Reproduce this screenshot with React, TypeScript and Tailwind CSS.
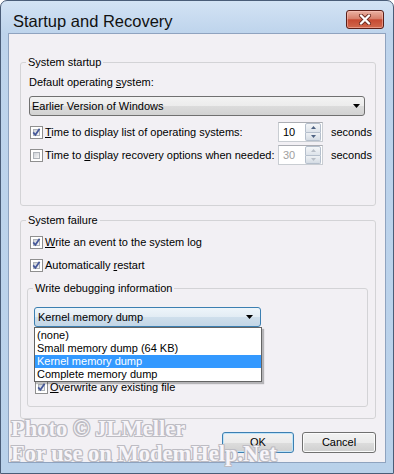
import React from "react";

function Check({ checked = false }: { checked?: boolean }) {
  return (
    <span className="relative block w-[13px] h-[13px] shrink-0 border border-[#8f8f8f] bg-white p-[2px]">
      <span className="block w-full h-full border border-[#aeb3b9] bg-[linear-gradient(135deg,#cfd3d9,#f7f7f7)]" />
      {checked && (
        <svg className="absolute left-0 top-0" width="11" height="11" viewBox="0 0 11 11">
          <path d="M2.2 5.4 L4.4 7.8 L8.6 1.8" fill="none" stroke="#45589a" strokeWidth="1.7" />
        </svg>
      )}
    </span>
  );
}

function Arrow() {
  return (
    <svg width="7" height="4" viewBox="0 0 7 4">
      <polygon points="0,0 7,0 3.5,4" fill="#000" />
    </svg>
  );
}

function Spinner({ value, disabled = false }: { value: string; disabled?: boolean }) {
  const arrow = disabled ? "#b9bfc8" : "#4d6282";
  return (
    <div className="flex h-[20px] w-[45px] shrink-0 border border-[#c9cdd2] border-t-[#abadb3] bg-white">
      <span className={`flex-1 pl-[4px] leading-[18px] ${disabled ? "text-[#a0a0a0]" : "text-black"}`}>{value}</span>
      <div className="flex w-[16px] flex-col mr-[1px]">
        <span className="flex flex-1 items-center justify-center border border-[#b5bfcc] rounded-t-[2px] bg-[linear-gradient(#f4f6f8,#dde3ea)]">
          <svg width="5" height="3" viewBox="0 0 5 3">
            <polygon points="0,3 5,3 2.5,0" fill={arrow} />
          </svg>
        </span>
        <span className="flex flex-1 items-center justify-center border border-t-0 border-[#b5bfcc] rounded-b-[2px] bg-[linear-gradient(#eef1f4,#d5dce4)]">
          <svg width="5" height="3" viewBox="0 0 5 3">
            <polygon points="0,0 5,0 2.5,3" fill={arrow} />
          </svg>
        </span>
      </div>
    </div>
  );
}

function Legend({ children, offset }: { children: React.ReactNode; offset: string }) {
  return <legend className={`${offset} px-[2px] leading-[13px]`}>{children}</legend>;
}

const items = ["(none)", "Small memory dump (64 KB)", "Kernel memory dump", "Complete memory dump"];

export default function App() {
  return (
    <div className="relative flex h-[474px] w-[394px] flex-col overflow-hidden rounded-t-[7px] border border-[#4a5d78] bg-[linear-gradient(#d3e3f4,#bed4ec_32px,#b9d1ea)] font-['Liberation_Sans',Arial,sans-serif] text-[11px] text-black">
      <div className="flex h-[32px] shrink-0 items-start justify-between pl-[12px] pr-[9px]">
        <span className="mt-[10px] text-[16.5px] leading-[20px] text-[#111]">Startup and Recovery</span>
        <div className="mt-[9px] flex h-[19px] w-[38px] items-center justify-center rounded-[3px] border border-[#5a1f19] bg-[linear-gradient(#eab2a3,#d7806c_45%,#c64a33_52%,#d0684d)] shadow-[inset_0_0_0_1px_rgba(255,200,190,0.5)]">
          <svg width="14" height="11" viewBox="0 0 14 11">
            <path d="M3 1.5 L11 9.5 M11 1.5 L3 9.5" stroke="#6b2a20" strokeWidth="4" strokeLinecap="round" />
            <path d="M3 1.5 L11 9.5 M11 1.5 L3 9.5" stroke="#ffffff" strokeWidth="2.4" strokeLinecap="round" />
          </svg>
        </div>
      </div>

      <div className="mx-[7px] flex min-w-0 flex-1 flex-col border border-[#8fa3bf] bg-[#f2f0f4] pl-[11px] pr-[9px] pt-[22px] pb-[9px]">
        <fieldset className="min-w-0 rounded-[3px] border border-[#d3d3d6] pl-[8px] pr-[7px] pb-[40px]">
          <Legend offset="-ml-[3px]">System startup</Legend>
          <div className="mt-[7px] leading-[13px]">
            Default operating <span className="underline">s</span>ystem:
          </div>
          <div className="mt-[7px] mr-[3px] flex h-[20px] items-center justify-between rounded-[3px] border border-[#707070] bg-[linear-gradient(#f3f3f3,#ececec_50%,#dcdcdc_50%,#d2d2d2)] pl-[2px] pr-[4px]">
            <span>Earlier Version of Windows</span>
            <Arrow />
          </div>
          <div className="mt-[6px] flex h-[20px] items-center">
            <div className="flex w-[249px] shrink-0 items-center">
              <span className="ml-[1px]"><Check checked /></span>
              <span className="ml-[2px] whitespace-nowrap">
                <span className="underline">T</span>ime to display list of operating systems:
              </span>
            </div>
            <Spinner value="10" />
            <span className="ml-[8px] whitespace-nowrap">seconds</span>
          </div>
          <div className="mt-[3px] flex h-[20px] items-center">
            <div className="flex w-[249px] shrink-0 items-center">
              <span className="ml-[1px]"><Check /></span>
              <span className="ml-[2px] whitespace-nowrap">
                Time to <span className="underline">d</span>isplay recovery options when needed:
              </span>
            </div>
            <Spinner value="30" disabled />
            <span className="ml-[8px] whitespace-nowrap">seconds</span>
          </div>
        </fieldset>

        <fieldset className="mt-[8px] min-w-0 rounded-[3px] border border-[#d3d3d6] pl-[6px] pr-[7px] pb-[11px]">
          <Legend offset="-ml-[1px]">System failure</Legend>
          <div className="ml-[3px] mt-[9px] flex h-[13px] items-center">
            <Check checked />
            <span className="ml-[2px] leading-[13px]">
              <span className="underline">W</span>rite an event to the system log
            </span>
          </div>
          <div className="ml-[3px] mt-[10px] flex h-[13px] items-center">
            <Check checked />
            <span className="ml-[2px] leading-[13px]">
              Automatically <span className="underline">r</span>estart
            </span>
          </div>

          <fieldset className="mt-[10px] min-w-0 rounded-[3px] border border-[#d3d3d6] pl-[6px] pr-[6px] pb-[12px]">
            <Legend offset="-ml-[1px]">Write debugging information</Legend>
            <div className="relative mt-[12px] w-[227px]">
              <div className="flex h-[20px] items-center justify-between rounded-[3px] border border-[#3c7fb1] bg-[linear-gradient(#eef5fa,#e2ecf4_50%,#cfdfec_50%,#c3d6e6)] pl-[3px] pr-[7px]">
                <span>Kernel memory dump</span>
                <Arrow />
              </div>
              <div className="absolute left-0 top-full z-10 w-[228px] border border-[#646464] bg-white pt-[1px] shadow-[2px_2px_1px_rgba(0,0,0,0.25)]">
                {items.map((t) => (
                  <div
                    key={t}
                    className={`h-[13px] px-[2px] leading-[13px] whitespace-nowrap ${t === "Kernel memory dump" ? "bg-[#3399ff] text-white" : ""}`}
                  >
                    {t}
                  </div>
                ))}
              </div>
            </div>
            <div className="h-[54px]" />
            <div className="ml-[1px] flex h-[13px] items-center">
              <Check checked />
              <span className="ml-[2px] leading-[13px]">
                <span className="underline">O</span>verwrite any existing file
              </span>
            </div>
          </fieldset>
        </fieldset>

        <div className="mt-auto flex justify-end gap-[8px]">
          <button className="h-[21px] w-[72px] rounded-[3px] border border-[#3c7fb1] bg-[linear-gradient(#f2f2f2,#ebebeb_50%,#dddddd_50%,#cfcfcf)] shadow-[inset_0_0_0_1px_#bfe3f8]">
            OK
          </button>
          <button className="h-[21px] w-[74px] rounded-[3px] border border-[#707070] bg-[linear-gradient(#f2f2f2,#ebebeb_50%,#dddddd_50%,#cfcfcf)] shadow-[inset_0_0_0_1px_#fbfbfb]">
            Cancel
          </button>
        </div>
      </div>
      <div className="h-[10px] shrink-0" />

      <div className="pointer-events-none absolute left-[10px] top-[415px] font-['Liberation_Serif','Times_New_Roman',serif] text-[22.5px] font-bold leading-[25px] text-[#f7f5f9] [text-shadow:1px_0_#bdbcc3,-1px_0_#bdbcc3,0_1px_#bdbcc3,0_-1px_#bdbcc3,1px_1px_#bdbcc3,-1px_-1px_#bdbcc3,1px_-1px_#bdbcc3,-1px_1px_#bdbcc3]">
        <div className="whitespace-nowrap">Photo © JLMeller</div>
        <div className="whitespace-nowrap">For use on ModemHelp.Net</div>
      </div>
    </div>
  );
}
